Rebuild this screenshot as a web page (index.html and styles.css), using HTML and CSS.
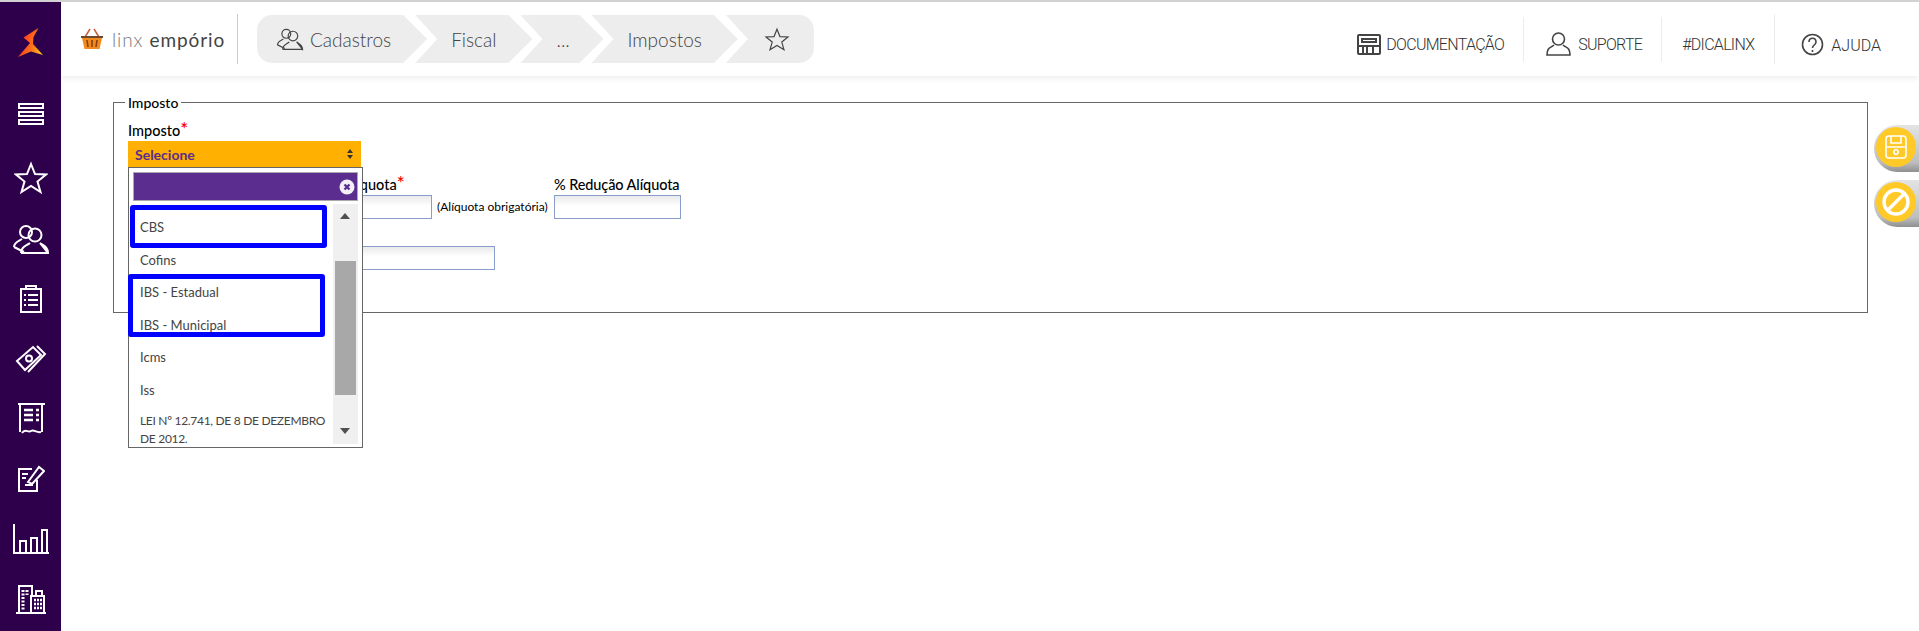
FILE: index.html
```html
<!DOCTYPE html>
<html lang="en">
<head>
    <meta charset="UTF-8">
    <meta name="viewport" content="width=device-width, initial-scale=1.0">
    <title>Linx Empório - Impostos</title>
    <link rel="stylesheet" href="styles.css">
</head>
<body>
    <aside class="sidebar">
        <div class="side-logo">
            <svg width="28" height="32" viewBox="0 0 28 32">
                <defs>
                    <linearGradient id="flame" x1="0" y1="0.6" x2="1" y2="1">
                        <stop offset="0" stop-color="#ff2f22"/>
                        <stop offset="0.55" stop-color="#ff7a18"/>
                        <stop offset="1" stop-color="#ffd21a"/>
                    </linearGradient>
                </defs>
                <path fill="url(#flame)" d="M21.5 2 L6.5 11.5 L13 17 L1 31 L14 25.5 L26 29 L16 18 L16.5 11 Z"/>
            </svg>
        </div>
        <nav class="side-menu">
            <a class="side-item side-first"><svg class="ico" width="28" height="24" viewBox="0 0 28 24"><rect x="2" y="2" width="24" height="4"/><rect x="2" y="10" width="24" height="4"/><rect x="2" y="18" width="24" height="4"/></svg></a>
            <a class="side-item side-star"><svg class="ico" width="34" height="34" viewBox="0 0 34 34"><path d="M17 3 L21 13 L32 13.5 L23.5 20.5 L26.5 31 L17 25 L7.5 31 L10.5 20.5 L2 13.5 L13 13 Z"/></svg></a>
            <a class="side-item"><svg class="ico" width="38" height="30" viewBox="0 0 38 30"><circle cx="14" cy="8" r="6"/><path d="M2 23 C2 18 7 17 10 15 M12 28 L2 23"/><circle cx="23" cy="11" r="6.5"/><path d="M9 29 C9 23 14 22 18 19 M28 19 C32 22 36 23 36 29 Z M9 29 H36"/></svg></a>
            <a class="side-item"><svg class="ico" width="24" height="28" viewBox="0 0 24 28"><rect x="2" y="4" width="20" height="23"/><rect x="7" y="1" width="10" height="3"/><path d="M5 10 H7 M9 10 H19 M5 15 H7 M9 15 H19 M5 20 H7 M9 20 H19"/></svg></a>
            <a class="side-item"><svg class="ico" width="32" height="28" viewBox="0 0 32 28"><path d="M2 16 L18 2 L26 10 L10 25 Z"/><circle cx="14" cy="13.5" r="3"/><path d="M22 1 L30 9 L13 27"/></svg></a>
            <a class="side-item"><svg class="ico" width="28" height="34" viewBox="0 0 28 34"><path d="M1 2 H28 M3 2 V30 M25 2 V30 M5 31 C8 26 11 31 14 29 C17 27 19 31 24 30"/><path d="M7 8 H16 M19 8 H22 M7 13 H16 M19 13 H22 M7 18 H16 M19 18 H22" stroke-width="2.4"/></svg></a>
            <a class="side-item"><svg class="ico" width="28" height="28" viewBox="0 0 28 28"><path d="M20 15 V26 H2 V4 H15"/><path d="M11 17 L22 2 L27 6 L15 19 Z"/><path d="M5 9 H11 M5 13 H9 M8 20 H16"/></svg></a>
            <a class="side-item"><svg class="ico" width="38" height="32" viewBox="0 0 38 32"><path d="M2 1 V30 H37"/><path d="M8 30 V18 H14 V30 M19 30 V15 H25 V30 M30 30 V7 H35 V30"/></svg></a>
            <a class="side-item"><svg class="ico" width="32" height="32" viewBox="0 0 32 32"><path d="M1 30 H31"/><path d="M4 30 V3 H17 V14 M16 30 V13 H29 V30"/><path d="M21 13 V8 H27 V13"/><path d="M8 7 V27 M12 7 V12" stroke-width="3" stroke-dasharray="2 1.5"/><path d="M19 17 H27 M19 21 H27 M19 25 H27" stroke-width="2.4" stroke-dasharray="2 1"/></svg></a>
        </nav>
    </aside>

    <div class="main">
        <header class="topbar">
            <div class="brand">
                <svg width="24" height="22" viewBox="0 0 24 22">
                    <path d="M5 9 L10 1 M19 9 L14 1" stroke="#c9603a" stroke-width="1.5" fill="none"/>
                    <path d="M1 8 H23 L23 10 H1 Z" fill="#6b4a30"/>
                    <path d="M2 10 H22 L19.5 21 H4.5 Z" fill="#f08a1c"/>
                    <path d="M7 12 L8 19 M12 12 V19 M17 12 L16 19" stroke="#8a3f14" stroke-width="1.6"/>
                </svg>
                <span class="brand-name">linx <b>empório</b></span>
            </div>
            <nav class="crumbs">
                <a class="crumb crumb-first">
                    <svg class="top-ico" width="28" height="24" viewBox="0 0 38 30"><circle cx="14" cy="8" r="6"/><path d="M2 23 C2 18 7 17 10 15 M12 28 L2 23"/><circle cx="23" cy="11" r="6.5"/><path d="M9 29 C9 23 14 22 18 19 M28 19 C32 22 36 23 36 29 Z M9 29 H36"/></svg>
                    Cadastros
                </a>
                <a class="crumb">Fiscal</a>
                <a class="crumb crumb-dots">...</a>
                <a class="crumb">Impostos</a>
                <a class="crumb crumb-last">
                    <svg class="top-ico" width="26" height="25" viewBox="0 0 34 34"><path d="M17 3 L21 13 L32 13.5 L23.5 20.5 L26.5 31 L17 25 L7.5 31 L10.5 20.5 L2 13.5 L13 13 Z"/></svg>
                </a>
            </nav>
            <nav class="top-links">
                <a class="top-link link-doc">
                    <svg class="top-ico ico-doc" width="24" height="21" viewBox="0 0 24 21"><rect x="1" y="1" width="22" height="19" rx="1"/><rect x="5" y="5" width="14" height="3"/><path d="M1 12 H6 V20 M23 12 H16 V20 M6 12 H16 M10 12 V20"/></svg>
                    DOCUMENTAÇÃO
                </a>
                <a class="top-link link-sup">
                    <svg class="top-ico" width="25" height="24" viewBox="0 0 25 24"><circle cx="12.5" cy="7" r="6"/><path d="M8 13 C5 16 1 15 1 23 H24 C24 15 20 16 17 13"/></svg>
                    SUPORTE
                </a>
                <a class="top-link link-tip">#DICALINX</a>
                <a class="top-link link-help">
                    <svg class="top-ico" width="23" height="23" viewBox="0 0 23 23"><circle cx="11.5" cy="11.5" r="10"/><path d="M8 9 C8 4 15 4 15 9 C15 12 11.5 12 11.5 15 M11.5 17 V19"/></svg>
                    <span class="help-text">AJUDA</span>
                </a>
            </nav>
        </header>

        <main class="content">
            <fieldset class="panel">
                <legend>Imposto</legend>

                <label class="field-label">Imposto<span class="req">*</span></label>
                <div class="select-wrap">
                    <div class="select-box">
                        <span>Selecione</span>
                        <svg width="8" height="12" viewBox="0 0 8 12"><path d="M4 1 L7 5 H1 Z M4 11 L7 7 H1 Z" fill="#333"/></svg>
                    </div>
                    <div class="dropdown">
                        <div class="search-box">
                            <svg width="16" height="16" viewBox="0 0 16 16"><circle cx="8" cy="8" r="7.5" fill="#f4f0f8"/><path d="M5.5 5.5 L10.5 10.5 M10.5 5.5 L5.5 10.5" stroke="#5b2d8e" stroke-width="2.4"/></svg>
                        </div>
                        <div class="drop-body">
                            <ul class="options">
                                <li>CBS</li>
                                <li>Cofins</li>
                                <li>IBS - Estadual</li>
                                <li>IBS - Municipal</li>
                                <li>Icms</li>
                                <li>Iss</li>
                                <li class="option-long">LEI Nº 12.741, DE 8 DE DEZEMBRO DE 2012.</li>
                            </ul>
                            <div class="scrollbar">
                                <span class="arrow-up"></span>
                                <span class="thumb"></span>
                                <span class="arrow-down"></span>
                            </div>
                        </div>
                        <span class="mark mark-one"></span>
                        <span class="mark mark-two"></span>
                    </div>
                </div>

                <div class="rate-row">
                    <div class="field field-rate">
                        <label class="field-label">Alíquota<span class="req">*</span></label>
                        <input class="text-input" type="text">
                    </div>
                    <span class="rate-note">(Alíquota obrigatória)</span>
                    <div class="field field-reduction">
                        <label class="field-label">% Redução Alíquota</label>
                        <input class="text-input" type="text">
                    </div>
                </div>

                <input class="text-input input-wide" type="text">
            </fieldset>
        </main>
    </div>

    <a class="side-btn btn-save">
        <svg class="btn-ico" width="24" height="26" viewBox="0 0 24 26"><rect x="2" y="2" width="20" height="22" rx="3"/><path d="M7 2 V9 H17 V2 M2 13 H22"/><circle cx="12" cy="18" r="2.2"/></svg>
    </a>
    <a class="side-btn btn-cancel">
        <svg class="btn-ico btn-ico-bold" width="30" height="30" viewBox="0 0 30 30"><circle cx="15" cy="15" r="12"/><path d="M7 23 L23 7"/></svg>
    </a>
</body>
</html>
```

FILE: styles.css
```css
* {
    box-sizing: border-box;
}
html, body {
    height: 100%;
}
body {
    margin: 0;
    display: flex;
    border-top: 2px solid #d2d2d2;
    font-family: Lato, "Noto Sans", sans-serif;
    background: #fff;
    overflow: hidden;
}
a {
    color: inherit;
    text-decoration: none;
}

/* sidebar */
.sidebar {
    width: 61px;
    flex-shrink: 0;
    background: #2e004b;
}
.side-logo {
    height: 82px;
    display: flex;
    align-items: center;
    justify-content: center;
    padding-top: 1px;
    padding-bottom: 4px;
}
.side-item {
    height: 60px;
    display: flex;
    align-items: center;
    justify-content: center;
}
.side-first {
    margin-bottom: 2px;
}
.side-star {
    height: 63px;
}
.ico {
    fill: none;
    stroke: #fff;
    stroke-width: 2;
}

/* header */
.main {
    flex: 1;
    min-width: 0;
}
.topbar {
    height: 74px;
    display: flex;
    align-items: center;
    padding-left: 19px;
    box-shadow: 0 2px 6px rgba(0,0,0,0.08);
}
.brand {
    width: 158px;
    height: 50px;
    display: flex;
    align-items: center;
    gap: 8px;
    border-right: 1px solid #ccc;
    flex-shrink: 0;
}
.brand-name {
    font-size: 19px;
    letter-spacing: 0.9px;
    color: #7a7a7a;
    font-weight: 300;
}
.brand-name b {
    font-weight: 400;
    color: #444;
}
.crumbs {
    display: flex;
    margin-left: 19px;
}
.crumb {
    height: 48px;
    padding: 0 36px;
    margin-left: -12px;
    display: flex;
    align-items: center;
    gap: 6px;
    font-size: 19px;
    font-weight: 300;
    color: #444;
    background: #ededed;
    clip-path: polygon(0 0, calc(100% - 24px) 0, 100% 50%, calc(100% - 24px) 100%, 0 100%, 22px 50%);
}
.crumb-first {
    margin-left: 0;
    padding-left: 19px;
    border-radius: 15px 0 0 15px;
    clip-path: polygon(0 0, calc(100% - 24px) 0, 100% 50%, calc(100% - 24px) 100%, 0 100%);
}
.crumb-dots {
    width: 83px;
    padding: 0 0 0 36px;
}
.crumb-last {
    width: 88px;
    padding: 0 0 0 38px;
    border-radius: 0 15px 15px 0;
    clip-path: polygon(0 0, 100% 0, 100% 100%, 0 100%, 22px 50%);
}
.top-ico {
    fill: none;
    stroke: #444;
    stroke-width: 1.6;
    flex-shrink: 0;
}
.ico-doc {
    stroke-width: 2;
}
.top-links {
    margin-left: auto;
    display: flex;
    align-items: center;
    height: 100%;
}
.top-link {
    height: 45px;
    padding-top: 10px;
    display: flex;
    align-items: center;
    gap: 7px;
    font-family: Roboto, sans-serif;
    font-size: 16px;
    font-weight: 300;
    letter-spacing: -0.7px;
    color: #333;
    border-right: 1px solid #ececec;
}
.link-doc {
    padding-right: 19px;
    gap: 5px;
}
.link-sup {
    padding-right: 19px;
    padding-left: 22px;
}
.link-tip {
    height: 50px;
    padding-right: 20px;
    padding-left: 20px;
}
.link-help {
    padding-right: 38px;
    padding-left: 26px;
    border-right: none;
}
.help-text {
    padding-top: 3px;
    letter-spacing: 0;
}

/* form */
.content {
    padding: 18px 51px 0 52px;
}
.panel {
    margin: 0;
    height: 219px;
    padding: 11px 14px 0;
    border: 1px solid #666;
    min-width: 0;
}
.panel legend {
    padding: 0 3px;
    margin-left: -3px;
    font-size: 14px;
    font-weight: 500;
    color: #000;
}
.field-label {
    display: block;
    height: 19px;
    line-height: 18px;
    font-size: 14.5px;
    font-weight: 500;
    color: #000;
}
.req {
    color: #f00;
    font-size: 19px;
    line-height: 14px;
}
.select-wrap {
    position: relative;
    width: 233px;
}
.select-box {
    height: 26px;
    padding: 0 7px;
    display: flex;
    align-items: center;
    justify-content: space-between;
    background: #ffb000;
    color: #5b2d8e;
    font-size: 14px;
    font-weight: 700;
}
.dropdown {
    position: absolute;
    top: 26px;
    left: 0;
    z-index: 5;
    width: 235px;
    height: 281px;
    padding: 4px;
    background: #fff;
    border: 1px solid #666;
}
.search-box {
    height: 29px;
    padding-right: 2px;
    display: flex;
    align-items: center;
    justify-content: flex-end;
    background: #5b2d8e;
    border: 1px solid #aaa;
}
.drop-body {
    position: relative;
    height: 243px;
    margin-top: 3px;
    overflow: hidden;
}
.options {
    list-style: none;
    margin: 0;
    padding: 7px 30px 0 7px;
    font-size: 13px;
    color: #444;
}
.options li {
    height: 32.5px;
    line-height: 32px;
}
.options .option-long {
    height: 41px;
    padding-top: 6px;
    line-height: 17.5px;
    font-size: 12px;
    letter-spacing: -0.3px;
}
.scrollbar {
    position: absolute;
    top: 0;
    right: 0;
    bottom: 3px;
    width: 25px;
    background: #f0f0f0;
}
.thumb {
    position: absolute;
    top: 57px;
    left: 2px;
    width: 21px;
    height: 134px;
    background: #a8a8a8;
}
.arrow-up, .arrow-down {
    position: absolute;
    left: 7px;
    border-left: 5.5px solid transparent;
    border-right: 5.5px solid transparent;
}
.arrow-up {
    top: 9px;
    border-bottom: 6px solid #505050;
}
.arrow-down {
    bottom: 10px;
    border-top: 6px solid #505050;
}
.mark {
    position: absolute;
    border: 5px solid #00f;
    border-radius: 3px;
}
.mark-one {
    top: 37px;
    left: 1px;
    width: 197px;
    height: 43px;
}
.mark-two {
    top: 106px;
    left: -1px;
    width: 197px;
    height: 63px;
}
.rate-row {
    display: flex;
    align-items: flex-end;
    margin-top: 9px;
    padding-left: 202px;
}
.field-rate {
    width: 102px;
}
.field-rate .field-label {
    padding-left: 13px;
}
.rate-note {
    width: 122px;
    padding-left: 5px;
    height: 24px;
    line-height: 24px;
    font-size: 12px;
    color: #000;
}
.field-reduction {
    width: 127px;
}
.field-reduction .field-label {
    white-space: nowrap;
    letter-spacing: -0.1px;
}
.text-input {
    display: block;
    width: 100%;
    height: 24px;
    padding: 0 4px;
    border: 1px solid #8a9ccc;
    border-radius: 0;
    background: linear-gradient(#eaeaea, #fff 45%);
    outline: none;
}
.input-wide {
    width: 367px;
    margin-top: 27px;
}

/* floating buttons on the right edge */
.side-btn {
    position: absolute;
    right: 0;
    width: 45px;
    height: 47px;
    border-radius: 24px 0 0 24px;
    background: linear-gradient(#e4e4e4, #bdbdbd 80%, #8f8f8f);
}
.side-btn::before {
    content: "";
    position: absolute;
    top: 2px;
    left: 2px;
    width: 40px;
    height: 40px;
    border-radius: 50%;
    background: #ffc928;
}
.btn-save {
    top: 125px;
}
.btn-cancel {
    top: 180px;
}
.btn-ico {
    position: absolute;
    top: 9px;
    left: 10px;
    fill: none;
    stroke: #fff;
    stroke-width: 1.6;
}
.btn-ico-bold {
    top: 7px;
    left: 7px;
    stroke-width: 3.4;
}
```
